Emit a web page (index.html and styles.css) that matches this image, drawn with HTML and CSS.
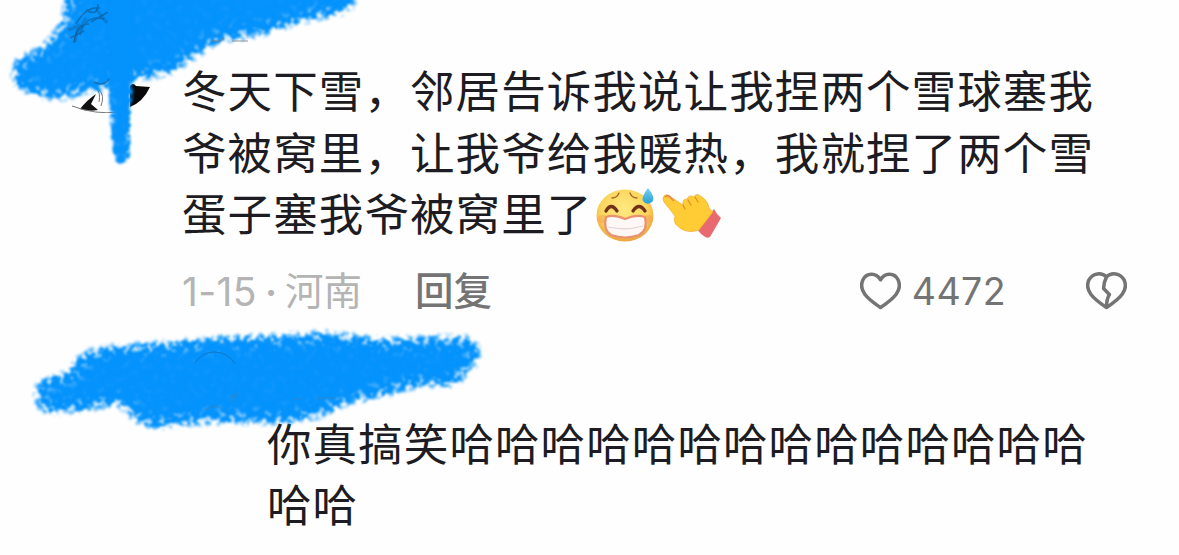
FILE: index.html
```
<!DOCTYPE html>
<html lang="zh-CN">

<head>
    <meta charset="UTF-8">
    <meta name="viewport" content="width=device-width, initial-scale=1.0">
    <title>评论</title>
    <link rel="stylesheet" href="styles.css">
</head>

<body>
    <div class="comments">
        <div class="comment">
            <svg class="avatar" viewBox="0 0 112 112">
                <path d="M38 108 Q45 99 54 93 L49 103 L56 109 Q46 111 38 108Z" fill="#111"/>
                <path d="M88 85 Q91 81 94 85 L108 86 Q101 101 88 106Z" fill="#090909"/>
                <path d="M30 105 Q54 114 76 111 M54 86 Q59 92 57 101 M57 89 Q63 94 59 105" fill="none" stroke="#777" stroke-width="1"/>
            </svg>
            <div class="body">
                <p class="text">冬天下雪，邻居告诉我说让我捏两个雪球塞我<br>爷被窝里，让我爷给我暖热，我就捏了两个雪<br>蛋子塞我爷被窝里了<svg class="emoji" viewBox="0 0 60 56">
                        <defs>
                            <radialGradient id="face" cx="48%" cy="38%" r="62%">
                                <stop offset="0" stop-color="#ffe981"/>
                                <stop offset=".65" stop-color="#fbd65e"/>
                                <stop offset="1" stop-color="#eda33b"/>
                            </radialGradient>
                            <linearGradient id="drop" x1="0" y1="0" x2="0" y2="1">
                                <stop offset="0" stop-color="#77d2f0"/>
                                <stop offset="1" stop-color="#269fd7"/>
                            </linearGradient>
                        </defs>
                        <ellipse cx="29" cy="27.500" rx="28.500" ry="26" fill="url(#face)"/>
                        <ellipse cx="7" cy="31" rx="6" ry="4" fill="#f59b4d" opacity=".4"/>
                        <ellipse cx="52" cy="31" rx="5" ry="4" fill="#f59b4d" opacity=".4"/>
                        <path d="M16 10 Q21 10 23 5 M34 5 Q36 10 41 10" fill="none" stroke="#a5651e" stroke-width="1.300" stroke-linecap="round"/>
                        <path d="M10 23 Q15 14 21 23 M37 23 Q43 14 49 23" fill="none" stroke="#70321a" stroke-width="3.300" stroke-linecap="round"/>
                        <path d="M10 29 Q18 26 29 31 Q40 26 49 29 Q52 42 43 47 Q29 52 15 47 Q7 42 10 29Z" fill="#fff7f5" stroke="#e99272" stroke-width="2.200"/>
                        <path d="M12 39 Q30 43 47 38" fill="none" stroke="#ded5d6" stroke-width="1.200"/>
                        <path d="M52 0 Q60 10 56 14 Q51 18 47 13 Q45 9 52 0Z" fill="url(#drop)"/>
                    </svg><svg class="emoji hand" viewBox="0 0 60 50">
                        <path d="M35 37 L52 17 Q55 23 59 26 L48 45 Q43 48 35 37Z" fill="#e86a70"/>
                        <path d="M2 4 Q5 1 9 5 L21 13 Q20 7 25 7 Q27 2 32 5 Q34 0 40 5 Q46 9 47 16 L51 20 L37 38 Q26 42 18 36 Q10 31 13 24 L2 10 Q0 7 2 4Z" fill="#ffcc35" stroke="#eaa22a" stroke-width=".6"/>
                        <path d="M3 5 Q6 2 9 6 L12 9" fill="none" stroke="#e9844c" stroke-width="1.600"/>
                        <path d="M21 13 L23 17 M26 8 L29 13 M33 5 L36 10" fill="none" stroke="#dc9122" stroke-width="1.200" stroke-linecap="round"/>
                    </svg></p>
                <div class="meta">
                    <span class="date">1-15</span><span class="dot">·</span><span class="place">河南</span>
                    <span class="reply-link">回复</span>
                    <span class="likes">
                        <svg class="heart" viewBox="0 0 42 40">
                            <path d="M21 8 C17 1 7 0 3 8 C-2 19 7 27 21 36.500 C35 27 44 19 39 8 C35 0 25 1 21 8Z"/>
                        </svg>
                        <span class="count">4472</span>
                    </span>
                    <svg class="heart" viewBox="0 0 42 40">
                        <path d="M21 5 C16 0 7 1 3 8 C-2 19 7 27 21 36.500 C35 27 44 19 39 8 C35 1 26 0 21 5 Q18 11 18 17 L24 23 Q21 28 21 36"/>
                    </svg>
                </div>
            </div>
        </div>
        <div class="comment reply">
            <div class="small-avatar"></div>
            <p class="text">你真搞笑哈哈哈哈哈哈哈哈哈哈哈哈哈哈<br>哈哈</p>
        </div>
    </div>

    <!-- brush strokes over the user names -->
    <svg class="paint" viewBox="0 0 1179 555">
        <defs>
            <filter id="brush" filterUnits="userSpaceOnUse" x="-40" y="-60" width="600" height="540" color-interpolation-filters="sRGB">
                <feGaussianBlur in="SourceGraphic" stdDeviation="7.500" result="soft"/>
                <feTurbulence type="fractalNoise" baseFrequency=".17" numOctaves="3" seed="7"/>
                <feColorMatrix type="matrix" values="0 0 0 0 0  0 0 0 0 .57  0 0 0 0 1  4 0 0 0 -1.5" result="noise"/>
                <feComposite in="soft" in2="noise" operator="arithmetic" k1="1.200" k2=".72"/>
                <feComponentTransfer>
                    <feFuncA type="linear" slope="2.100" intercept="-.55"/>
                </feComponentTransfer>
                <feColorMatrix type="matrix" values="0 0 0 0 .015  0 0 0 0 .573  0 0 0 0 .99  0 0 0 1 0"/>
                <feGaussianBlur stdDeviation=".8"/>
            </filter>
            <filter id="brush-thin" filterUnits="userSpaceOnUse" x="90" y="-40" width="60" height="230" color-interpolation-filters="sRGB">
                <feGaussianBlur in="SourceGraphic" stdDeviation="2.500" result="soft"/>
                <feTurbulence type="fractalNoise" baseFrequency=".17" numOctaves="3" seed="3"/>
                <feColorMatrix type="matrix" values="0 0 0 0 0  0 0 0 0 .57  0 0 0 0 1  4 0 0 0 -1.5" result="noise"/>
                <feComposite in="soft" in2="noise" operator="arithmetic" k1="1.200" k2=".72"/>
                <feComponentTransfer>
                    <feFuncA type="linear" slope="2.100" intercept="-.55"/>
                </feComponentTransfer>
                <feColorMatrix type="matrix" values="0 0 0 0 .015  0 0 0 0 .573  0 0 0 0 .99  0 0 0 1 0"/>
                <feGaussianBlur stdDeviation=".8"/>
            </filter>
        </defs>
        <g fill="#0492fb">
            <path filter="url(#brush)" d="M70 -50 L68 18 L52 42 L38 54 L17 60 L15 80 L25 90 L58 97 L85 90 L110 86 L132 77 L170 71 L195 54 L215 39 L260 32 L300 19 L350 9 L360 -50Z"/>
            <path filter="url(#brush-thin)" d="M110 -20 L110 90 L112 130 L115 162 L128 162 L130 120 L132 79 L132 -20Z"/>
            <path filter="url(#brush)" d="M78 359 L100 350 L160 346 L220 340 L290 338 L325 335 L380 342 L470 339 L478 353 L474 365 L462 370 L459 383 L420 382 L390 391 L340 402 L325 413 L285 420 L220 419 L175 422 L148 425 L132 415 L123 400 L78 408 L40 411 L38 383 L76 374Z"/>
        </g>
        <g class="traces">
            <path d="M76 24 Q86 6 100 8 M80 35 Q85 14 104 19 M70 38 L84 31 M86 10 Q98 17 98 4 M91 22 L108 12 M74 43 Q76 24 89 24 M94 82 Q103 87 109 79" stroke="#104a76" stroke-width="1.500" opacity=".5"/>
            <path d="M68 30 L78 26 L75 42 M86 18 L78 32 M96 9 L107 23" stroke="#164f78" stroke-width="3" opacity=".3"/>
            <path d="M212 40 Q219 44 224 38 M232 41 H248" stroke="#777" stroke-width="1.500" opacity=".5"/>
            <path d="M195 363 Q202 352 214 352 Q228 352 235 364" stroke="#176ba9" opacity=".7"/>
            <path d="M205 410 L215 405 L222 409 M229 398 L237 394 L232 403 M293 399 H301 M316 398 H337" stroke="#4b7ca2" stroke-width="1.500" opacity=".4"/>
        </g>
    </svg>
</body>

</html>
```
FILE: styles.css
```
* {
    margin: 0;
    padding: 0;
    box-sizing: border-box;
}

body {
    width: 1179px;
    height: 555px;
    overflow: hidden;
    background: #fefefe;
    color: #1c1c22;
    font-family: Inter, "Noto Sans CJK SC", sans-serif;
}

.comments {
    display: flex;
    flex-direction: column;
}

.comment {
    display: flex;
}

.avatar {
    width: 112px;
    height: 112px;
    margin: 1px 28px 0 42px;
}

.body {
    width: 950px;
    padding-top: 58px;
}

.text {
    font-family: "Noto Sans CJK SC", sans-serif;
    font-size: 44.5px;
    line-height: 61.5px;
    letter-spacing: 1.1px;
    white-space: nowrap;
}

.emoji {
    display: inline-block;
    width: 60px;
    height: 56px;
    margin: -20px 0 -10px 4px;
    vertical-align: -3px;
}

.hand {
    height: 50px;
    margin-left: 6px;
    vertical-align: -1px;
}

.meta {
    display: flex;
    align-items: center;
    height: 54px;
    margin-top: 22px;
    color: #747474;
    font-size: 38px;
}

.date,
.dot,
.place {
    color: #b4b4b4;
}

.date {
    font-size: 39px;
    letter-spacing: .4px;
}

.place,
.reply-link {
    position: relative;
    top: -4px;
    font-size: 38.5px;
}

.dot {
    width: 28px;
    text-align: center;
    font-weight: 600;
}

.reply-link {
    margin-left: 53px;
    font-weight: 500;
}

.likes {
    display: flex;
    align-items: center;
    gap: 11px;
    margin-left: auto;
    margin-right: 80px;
}

.heart {
    width: 41px;
    height: 39px;
    fill: none;
    stroke: #747474;
    stroke-width: 3.6;
    stroke-linecap: round;
    stroke-linejoin: round;
}

.meta > .heart {
    margin-right: 5px;
}

.count {
    font-size: 37.5px;
    letter-spacing: .4px;
}

.reply {
    padding-left: 185px;
    padding-top: 35px;
}

.small-avatar {
    width: 60px;
    height: 60px;
    margin-right: 22px;
    border-radius: 50%;
}

.reply .text {
    padding-top: 57px;
}

.paint {
    position: absolute;
    left: 0;
    top: 0;
    width: 1179px;
    height: 555px;
    pointer-events: none;
}

.traces {
    fill: none;
}
```
